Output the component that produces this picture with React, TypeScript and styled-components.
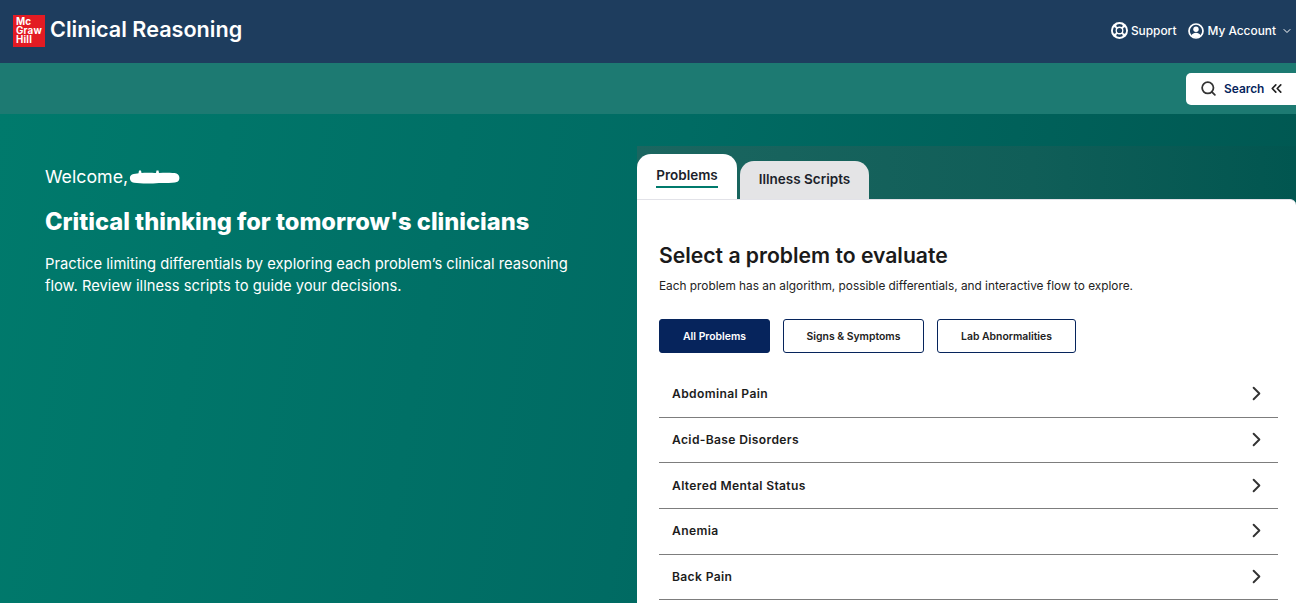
import React from "react";
import styled, { createGlobalStyle } from "styled-components";
import { ChevronDown, ChevronRight, ChevronsLeft, Search } from "lucide-react";

const Global = createGlobalStyle`
  html, body { margin: 0; padding: 0; height: 100%; overflow: hidden; }
  body { font-family: "Inter", "Liberation Sans", sans-serif; background: #00695f; }
  * { box-sizing: border-box; }
`;

const Page = styled.div`
  width: 1296px;
  height: 603px;
  overflow: hidden;
  display: flex;
  flex-direction: column;
`;

const Header = styled.header`
  height: 63px;
  flex: none;
  background: #1e3d5e;
  display: flex;
  align-items: center;
  justify-content: space-between;
  padding: 0 3px 2px 13px;
  color: #fff;
`;

const Brand = styled.div`
  display: flex;
  align-items: center;
  gap: 5px;
`;

const Logo = styled.div`
  width: 32px;
  height: 32px;
  background: #e31b23;
  color: #fff;
  font-size: 9.8px;
  line-height: 9.4px;
  font-weight: 700;
  letter-spacing: 0.2px;
  padding: 2px 0 0 3px;
  white-space: pre-line;
`;

const AppName = styled.div`
  font-size: 21.6px;
  font-weight: 600;
  margin-bottom: 3px;
`;

const HeaderNav = styled.nav`
  display: flex;
  align-items: center;
  gap: 12px;
`;

const NavItem = styled.a`
  display: flex;
  align-items: center;
  gap: 3px;
  font-size: 11.9px;
  font-weight: 500;
  color: #fff;
`;

const SubBar = styled.div`
  height: 51px;
  flex: none;
  background: #1d7a72;
  display: flex;
  justify-content: flex-end;
  padding-top: 10px;
`;

const SearchButton = styled.button`
  width: 110px;
  height: 32px;
  border: 0;
  background: #fff;
  border-radius: 5px 0 0 5px;
  display: flex;
  align-items: center;
  padding: 0 0 2px 14px;
  font: 600 11.9px "Inter", sans-serif;
  color: #06245c;
`;

const SearchLabel = styled.span`
  margin: 0 4px 0 7px;
`;

const Main = styled.main`
  flex: 1;
  min-height: 0;
  display: grid;
  grid-template-columns: 637px 1fr;
  background: linear-gradient(100deg, #007a6c 0%, #006b63 50%, #005650 100%);
`;

const Intro = styled.section`
  padding: 52px 50px 0 45px;
  color: #fff;
`;

const Welcome = styled.div`
  display: flex;
  align-items: center;
  font-size: 17.8px;
  line-height: 22px;
`;

const Scribble = styled.svg`
  display: block;
  margin-left: 1px;
`;

const Headline = styled.h1`
  margin: 19px 0 0;
  font-size: 23.65px;
  line-height: 30px;
  font-weight: 800;
`;

const Lead = styled.p`
  margin: 16px 0 0;
  width: 530px;
  font-size: 14.75px;
  line-height: 22px;
`;

const RightColumn = styled.section`
  padding-top: 32px;
  display: flex;
  flex-direction: column;
  min-height: 0;
`;

const TabBar = styled.div`
  height: 53px;
  flex: none;
  display: flex;
  align-items: flex-end;
  gap: 3px;
  background: linear-gradient(90deg, #1b6660 0%, #105e58 60%, #015650 100%);
`;

const Tab = styled.button<{ $active?: boolean }>`
  border: 0;
  width: ${(p) => (p.$active ? 100 : 129)}px;
  height: ${(p) => (p.$active ? 45 : 38)}px;
  background: ${(p) => (p.$active ? "#fff" : "#e4e4e6")};
  border-radius: 14px 14px 0 0;
  display: flex;
  justify-content: center;
  align-items: flex-start;
  padding: ${(p) => (p.$active ? 13 : 10)}px 0 0;
  font: 600 13.5px/16px "Inter", sans-serif;
  color: #1c1f2b;
`;

const TabLabel = styled.span<{ $active?: boolean }>`
  display: inline-block;
  padding-bottom: 3px;
  border-bottom: 2px solid ${(p) => (p.$active ? "#007a6c" : "transparent")};
`;

const Panel = styled.div`
  flex: 1;
  min-height: 0;
  overflow: hidden;
  background: #fff;
  border-top: 1px solid #e2e2e8;
  border-top-right-radius: 6px;
  padding: 42px 18px 0 22px;
`;

const PanelTitle = styled.h2`
  margin: 0;
  font-size: 21.15px;
  line-height: 28px;
  font-weight: 600;
  color: #1a1a1a;
`;

const PanelText = styled.p`
  margin: 8px 0 0;
  font-size: 11.83px;
  line-height: 17px;
  color: #232323;
`;

const Filters = styled.div`
  display: flex;
  gap: 13px;
  margin-top: 24px;
`;

const Filter = styled.button<{ $active?: boolean; $w: number }>`
  width: ${(p) => p.$w}px;
  height: 34px;
  border: 1px solid #06245c;
  border-radius: 3px;
  background: ${(p) => (p.$active ? "#06245c" : "#fff")};
  color: ${(p) => (p.$active ? "#fff" : "#222")};
  font: 600 10.4px "Inter", sans-serif;
  padding: 0;
`;

const List = styled.ul`
  list-style: none;
  margin: 19px 0 0;
  padding: 0;
`;

const Row = styled.li`
  height: 45.7px;
  display: flex;
  align-items: center;
  justify-content: space-between;
  padding: 0 13px 1px;
  border-bottom: 1px solid #7d7d7d;
  font-size: 12.1px;
  letter-spacing: 0.35px;
  font-weight: 600;
  color: #1c1c1c;
`;

const RowChevron = styled(ChevronRight)`
  width: 23px;
  height: 23px;
  margin-right: -3px;
  color: #333;
`;

const LifeRing = () => (
  <svg width="17" height="17" viewBox="0 0 17 17" aria-hidden="true">
    <circle cx="8.5" cy="8.5" r="8.5" fill="#fff" />
    <circle cx="8.5" cy="8.5" r="2.6" fill="#1e3d5e" />
    <g fill="none" stroke="#1e3d5e" strokeWidth="2.6" strokeLinecap="round">
      <path d="M6.6 3.6a5.3 5.3 0 0 1 3.8 0" />
      <path d="M13.4 6.6a5.3 5.3 0 0 1 0 3.8" />
      <path d="M10.4 13.4a5.3 5.3 0 0 1-3.8 0" />
      <path d="M3.6 10.4a5.3 5.3 0 0 1 0-3.8" />
    </g>
  </svg>
);

const AccountIcon = () => (
  <svg width="16" height="16" viewBox="0 0 16 16" aria-hidden="true">
    <circle cx="8" cy="8" r="7" fill="none" stroke="#fff" strokeWidth="1.7" />
    <circle cx="8" cy="6.3" r="2.7" fill="#fff" />
    <path d="M3.4 12.6C4.3 10.6 6 9.8 8 9.8s3.7.8 4.6 2.8A6.4 6.4 0 0 1 8 14.6a6.4 6.4 0 0 1-4.6-2z" fill="#fff" />
  </svg>
);

const problems = ["Abdominal Pain", "Acid-Base Disorders", "Altered Mental Status", "Anemia", "Back Pain"];

export default function App() {
  return (
    <Page>
      <Global />
      <Header>
        <Brand>
          <Logo>{"Mc\nGraw\nHill"}</Logo>
          <AppName>Clinical Reasoning</AppName>
        </Brand>
        <HeaderNav>
          <NavItem><LifeRing />Support</NavItem>
          <NavItem>
            <AccountIcon />
            My Account
            <ChevronDown size={12} strokeWidth={2} style={{ marginLeft: 2 }} />
          </NavItem>
        </HeaderNav>
      </Header>
      <SubBar>
        <SearchButton>
          <Search size={17} color="#333" strokeWidth={2.5} />
          <SearchLabel>Search</SearchLabel>
          <ChevronsLeft size={17} color="#222" strokeWidth={2.4} />
        </SearchButton>
      </SubBar>
      <Main>
        <Intro>
          <Welcome>
            Welcome,
            <Scribble width="51" height="15" viewBox="0 0 51 15" aria-hidden="true">
              <path
                d="M3 4.5C5 3.5 8 3.5 9.5 3.2L10 .6 12 .6 12.5 3C18 2.6 24 3 27 3L27.5 .6 29.5 .6 30 3C36 2.6 44 2.6 47.5 3.4 50.8 4.4 51.5 9.8 48.5 11.8 44 13.4 36 13 30 13 22 13.8 12 13.8 5 12.8 .6 12.2-.6 6.6 3 4.5Z"
                fill="#fff"
              />
            </Scribble>
          </Welcome>
          <Headline>Critical thinking for tomorrow's clinicians</Headline>
          <Lead>
            Practice limiting differentials by exploring each problem’s clinical reasoning flow. Review illness scripts to guide your decisions.
          </Lead>
        </Intro>
        <RightColumn>
          <TabBar>
            <Tab $active><TabLabel $active>Problems</TabLabel></Tab>
            <Tab><TabLabel>Illness Scripts</TabLabel></Tab>
          </TabBar>
          <Panel>
            <PanelTitle>Select a problem to evaluate</PanelTitle>
            <PanelText>Each problem has an algorithm, possible differentials, and interactive flow to explore.</PanelText>
            <Filters>
              <Filter $active $w={111}>All Problems</Filter>
              <Filter $w={141}>Signs &amp; Symptoms</Filter>
              <Filter $w={139}>Lab Abnormalities</Filter>
            </Filters>
            <List>
              {problems.map((p) => (
                <Row key={p}>{p}<RowChevron strokeWidth={2} /></Row>
              ))}
            </List>
          </Panel>
        </RightColumn>
      </Main>
    </Page>
  );
}
